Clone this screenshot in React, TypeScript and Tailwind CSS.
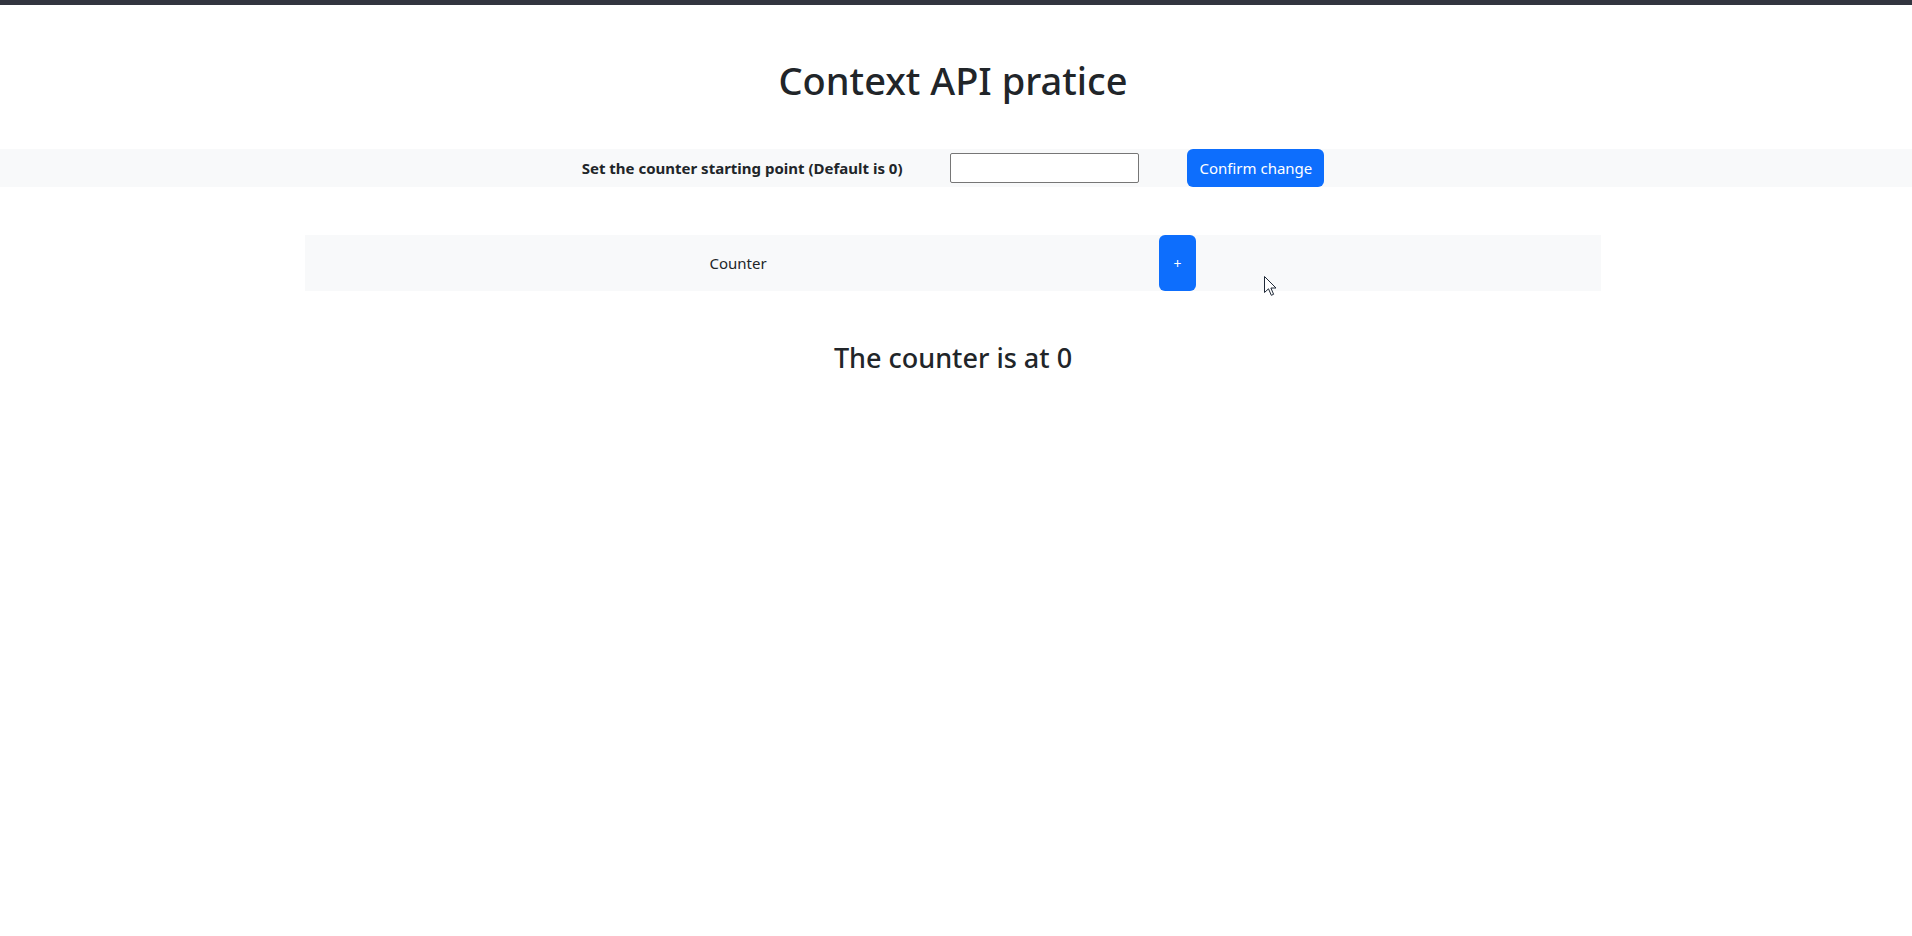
import React from "react";

function Cursor() {
  return (
    <svg
      className="absolute left-[1264px] top-[276px]"
      width="13"
      height="21"
      viewBox="0 0 13 21"
    >
      <path
        d="M0.5 0.5 L0.5 16.5 L4.5 12.8 L7.3 19.3 L9.6 18.3 L6.9 12 L12 12 Z"
        fill="#ffffff"
        stroke="#1f2937"
        strokeWidth="1"
        strokeLinejoin="miter"
      />
    </svg>
  );
}

export default function App() {
  return (
    <div
      className="relative min-h-[936px] bg-white text-[#212529]"
      style={{ fontFamily: '"Noto Sans", "Open Sans", sans-serif' }}
    >
      <div className="h-[5px] bg-[#32353f]" />
      <div className="pr-[6px] pt-[51px] pb-[45px]">
        <h1 className="text-center text-[38px] font-medium leading-[48px]">
          Context API pratice
        </h1>
      </div>
      <div className="flex h-[38px] items-center justify-center gap-12 bg-[#f8f9fa] pr-[6px]">
        <span className="text-[15px] font-bold">
          Set the counter starting point (Default is 0)
        </span>
        <input
          type="text"
          className="h-[30px] w-[189px] rounded-[2px] border border-[#767676] bg-white px-1"
        />
        <button className="h-[38px] rounded-[6px] bg-[#0d6efd] px-3 text-[15px] text-white">
          Confirm change
        </button>
      </div>
      <div className="mt-12 pr-[6px]">
        <div className="mx-auto flex h-[56px] w-[1296px] items-stretch bg-[#f8f9fa]">
          <div className="flex w-[854px] items-center justify-center pl-[12px] text-[15px]">
            Counter
          </div>
          <button className="w-[37px] rounded-[6px] bg-[#0d6efd] text-[14px] text-white">
            +
          </button>
        </div>
      </div>
      <h3 className="mt-[50px] pr-[6px] text-center text-[27px] font-medium leading-[34px]">
        The counter is at 0
      </h3>
      <Cursor />
    </div>
  );
}
